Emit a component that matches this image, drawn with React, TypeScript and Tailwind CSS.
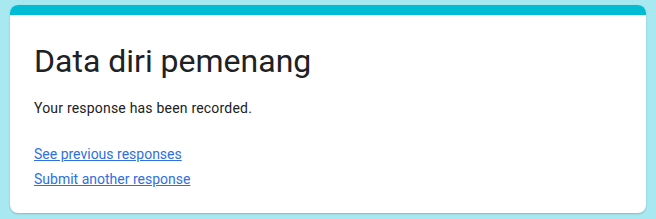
export default function App() {
  return (
    <div className="min-h-[219px] w-full bg-[#a8e8f0] px-[10px] pt-[5px] pb-[7px] font-['Roboto',sans-serif]">
      <div className="overflow-hidden rounded-lg bg-white shadow-[0_1px_2px_rgba(0,0,0,0.2)]">
        <div className="h-[10px] bg-[#00bcd4]" />
        <div className="px-6 pt-[26px] pb-6">
          <h1 className="text-[32px] leading-10 text-[#202124]">Data diri pemenang</h1>
          <p className="mt-[17px] text-sm leading-5 tracking-[0.2px] text-[#202124]">Your response has been recorded.</p>
          <div className="mt-[26px] flex flex-col gap-[5px] text-sm leading-5 text-[#2f6fe0]">
            <a href="#" className="w-fit underline">See previous responses</a>
            <a href="#" className="w-fit underline">Submit another response</a>
          </div>
        </div>
      </div>
    </div>
  );
}
